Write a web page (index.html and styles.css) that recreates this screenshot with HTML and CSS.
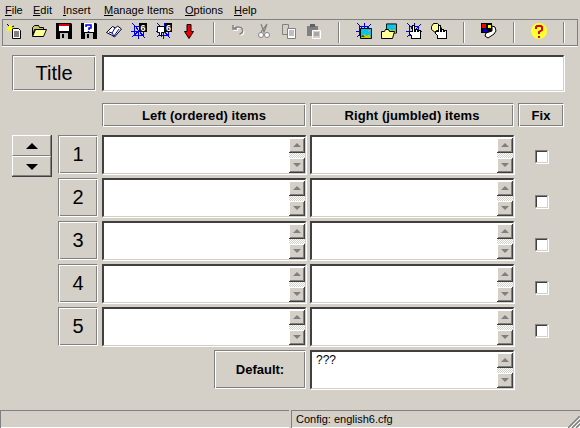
FILE: index.html
```html
<!DOCTYPE html>
<html lang="en">
<head>
  <meta charset="UTF-8" />
  <title>Matching Items</title>
  <link rel="stylesheet" href="styles.css">
</head>
<body>
  <svg class="defs" width="0" height="0">
    <symbol id="web" viewBox="0 0 16 16">
      <path class="web-line" d="M1 0L5 4L8 8L14 15M8 0V8L7 16M15 1L8 8L1 14M0 8H16M3 3H12L13 12L4 13Z" shape-rendering="crispEdges"/>
    </symbol>
    <symbol id="hand" viewBox="0 0 12 14">
      <path d="M3.500 .5h2v6h1v-2h2v2h1v-1h2v8h-9v-3l-2-2v-2h3z" fill="#fff" stroke="#000" shape-rendering="crispEdges"/>
    </symbol>
    <symbol id="floppy" viewBox="0 0 16 16">
      <path d="M0 0h15l1 1v15h-16z" fill="#000"/>
      <path d="M4 10h8v6h-8z" fill="#c0c0c0"/>
      <path d="M6 11h2v4h-2z" fill="#000"/>
    </symbol>
    <symbol id="picture" viewBox="0 0 12 11">
      <path d="M.5 .5h11v10h-11z" fill="#00c8e8" stroke="#000"/>
      <path d="M1 10l3-4l3 2l2-2l2 4z" fill="#e0c000"/>
      <path d="M3 7l2 2h-4z" fill="#006000"/>
      <path d="M8 2h2v2h-2z" fill="#a0a0a0"/>
    </symbol>
    <symbol id="folder" viewBox="0 0 16 12">
      <path d="M1.500 10.500v-8l2-2h4l1 2h4v2h-9l-2 6z" fill="#c8c860" stroke="#000"/>
      <path d="M1.500 11.500h11l3-7h-11z" fill="#ffff99" stroke="#000"/>
    </symbol>
  </svg>

  <div class="menu-bar">
    <span class="m-file"><u>F</u>ile</span>
    <span class="m-edit"><u>E</u>dit</span>
    <span class="m-insert"><u>I</u>nsert</span>
    <span class="m-manage"><u>M</u>anage Items</span>
    <span class="m-options"><u>O</u>ptions</span>
    <span class="m-help"><u>H</u>elp</span>
  </div>

  <div class="tool-bar">
    <span class="tool"><svg class="ico" viewBox="0 0 16 16"><path d="M6.500 5.500h6l2 2v8h-8z" fill="#fff" stroke="#000"/><path d="M8 9h5M8 11h5M8 13h5" stroke="#000"/><path d="M3 0l1 3l3-2l-2 3l3 1l-3 1l1 3l-3-2l-2 2l1-3l-2-1l3-1z" fill="#ffff00"/><path d="M1 1l2 2M8 3l-2 1" stroke="#000"/></svg></span>
    <span class="tool"><svg class="ico" viewBox="0 0 16 16"><use href="#folder" x="0" y="2" width="16" height="12"/></svg></span>
    <span class="tool"><svg class="ico" viewBox="0 0 16 16"><use href="#floppy" width="16" height="16"/><path d="M3 1h10v7h-10z" fill="#fff"/><path d="M3 1h10v2h-10z" fill="#e00000"/></svg></span>
    <span class="tool"><svg class="ico" viewBox="0 0 16 16"><use href="#floppy" width="16" height="16"/><path d="M3 0h10v9h-10z" fill="#fff"/><path d="M5 4v-2h5v3h-2v2M7.500 8v1" fill="none" stroke="#0000e0" stroke-width="1.500"/></svg></span>
    <span class="tool"><svg class="ico" viewBox="0 0 16 16"><path d="M.5 9.500l6-6l3 1.500l2-2l4 3l-7 8l-3-2z" fill="#fff" stroke="#000"/><path d="M9 5l-3 5M3 9l3 1l2 3l5-7" fill="none" stroke="#0000c0"/></svg></span>
    <span class="tool"><svg class="ico" viewBox="0 0 16 16"><use href="#web" width="16" height="16"/><path d="M8 0h8v9h-8z" fill="#000"/><text x="12" y="8" class="six">6</text></svg></span>
    <span class="tool"><svg class="ico" viewBox="0 0 16 16"><use href="#web" width="16" height="16"/><path d="M9 0h7v9h-7z" fill="#000"/><text x="12.500" y="8" class="six">6</text><path d="M1.500 3.500h7v6h-3v4l-2-2v-2h-2z" fill="#fff" stroke="#000"/></svg></span>
    <span class="tool"><svg class="ico" viewBox="0 0 16 16"><path d="M6 1.500h4v7h2.500l-4.500 7l-4.500-7h2.500z" fill="#f00000" stroke="#000"/></svg></span>
    <span class="tool-sep"></span>
    <span class="tool"><svg class="ico" viewBox="0 0 16 16"><path d="M3 3v4h4M3.500 6.500c3-2 8-2 9 1s-1 4-3 4.500" fill="none" stroke="#fff" stroke-width="1.500"/><path d="M2 2v4h4M2.500 5.500c3-2 8-2 9 1s-1 4-3 4.500" fill="none" stroke="#808080" stroke-width="1.500"/></svg></span>
    <span class="tool"><svg class="ico" viewBox="0 0 16 16"><path d="M5 1l3 8l3-8M11 1l-6 8" fill="none" stroke="#808080" stroke-width="1.200"/><circle cx="5" cy="12" r="2.500" fill="#fff" stroke="#808080"/><circle cx="11" cy="12" r="2.500" fill="#fff" stroke="#808080"/></svg></span>
    <span class="tool"><svg class="ico" viewBox="0 0 16 16"><path d="M1.500 1.500h6v10h-6z" fill="#d4d0c8" stroke="#808080"/><path d="M6.500 5.500h8v10h-8z" fill="#fff" stroke="#808080"/><path d="M8 8h5M8 10h5M8 12h5" stroke="#808080"/></svg></span>
    <span class="tool"><svg class="ico" viewBox="0 0 16 16"><path d="M1 3h11v10h-11z" fill="#808080"/><path d="M4 1h5v3h-5z" fill="#606060"/><path d="M6.500 7.500h8v8h-8z" fill="#d4d0c8" stroke="#fff"/><path d="M8 10h5M8 12h5" stroke="#808080"/></svg></span>
    <span class="tool-sep"></span>
    <span class="tool"><svg class="ico" viewBox="0 0 16 16"><use href="#web" width="16" height="16"/><use href="#picture" x="4" y="5" width="12" height="11"/></svg></span>
    <span class="tool"><svg class="ico" viewBox="0 0 16 16"><use href="#picture" x="5" y="0" width="11" height="11"/><path d="M.5 8.500h3l1-2h3l1 2h5l-2 7h-11z" fill="#ffff99" stroke="#000"/></svg></span>
    <span class="tool"><svg class="ico" viewBox="0 0 16 16"><use href="#web" width="16" height="16"/><use href="#hand" x="3" y="2" width="12" height="14"/></svg></span>
    <span class="tool"><svg class="ico" viewBox="0 0 16 16"><path d="M.5 6.500v-3l2-3h4l3 3l2 4h-6v3z" fill="#ffff99" stroke="#000"/><use href="#hand" x="4" y="2" width="12" height="14"/></svg></span>
    <span class="tool-sep"></span>
    <span class="tool"><svg class="ico" viewBox="0 0 16 16"><path d="M0 0h11v10h-11z" fill="#000"/><path d="M1 1h4v4h-4z" fill="#f00000"/><path d="M7 2h3v3h-3z" fill="#ffff00"/><path d="M4 5l3 4h-6z" fill="#0000e0"/><path d="M11 3l3 1l1 4l-2 3l-6 4l-3-2l1-3l6-2z" fill="#fff" stroke="#000"/></svg></span>
    <span class="tool-sep"></span>
    <span class="tool"><svg class="ico" viewBox="0 0 16 16"><circle cx="8" cy="8" r="8" fill="#ffff30"/><path d="M5 6v-2l1-1h4l1 1v3l-3 2v2" fill="none" stroke="#e00000" stroke-width="2"/><path d="M7 13h2v2h-2z" fill="#e00000"/></svg></span>
    <span class="tool-sep"></span>
  </div>

  <form class="editor">
    <div class="title-row">
      <button type="button" class="etched title-btn">Title</button>
      <div class="field title-field"></div>
    </div>

    <div class="head-row">
      <div class="etched head head-wide">Left (ordered) items</div>
      <div class="etched head head-wide">Right (jumbled) items</div>
      <div class="etched head head-fix">Fix</div>
    </div>

    <div class="body-row">
      <div class="updown">
        <button type="button" class="ud-btn"><span class="arrow-up"></span></button>
        <button type="button" class="ud-btn"><span class="arrow-down"></span></button>
      </div>
      <div class="rows">
        <div class="row">
          <button type="button" class="etched num">1</button>
          <div class="field item"><div class="scroll"><i class="sb sb-up"></i><i class="sb-track"></i><i class="sb sb-down"></i></div></div>
          <div class="field item"><div class="scroll"><i class="sb sb-up"></i><i class="sb-track"></i><i class="sb sb-down"></i></div></div>
          <div class="fix-cell fix-first"><input type="checkbox" class="check"></div>
        </div>
        <div class="row">
          <button type="button" class="etched num">2</button>
          <div class="field item"><div class="scroll"><i class="sb sb-up"></i><i class="sb-track"></i><i class="sb sb-down"></i></div></div>
          <div class="field item"><div class="scroll"><i class="sb sb-up"></i><i class="sb-track"></i><i class="sb sb-down"></i></div></div>
          <div class="fix-cell"><input type="checkbox" class="check"></div>
        </div>
        <div class="row">
          <button type="button" class="etched num">3</button>
          <div class="field item"><div class="scroll"><i class="sb sb-up"></i><i class="sb-track"></i><i class="sb sb-down"></i></div></div>
          <div class="field item"><div class="scroll"><i class="sb sb-up"></i><i class="sb-track"></i><i class="sb sb-down"></i></div></div>
          <div class="fix-cell"><input type="checkbox" class="check"></div>
        </div>
        <div class="row">
          <button type="button" class="etched num">4</button>
          <div class="field item"><div class="scroll"><i class="sb sb-up"></i><i class="sb-track"></i><i class="sb sb-down"></i></div></div>
          <div class="field item"><div class="scroll"><i class="sb sb-up"></i><i class="sb-track"></i><i class="sb sb-down"></i></div></div>
          <div class="fix-cell"><input type="checkbox" class="check"></div>
        </div>
        <div class="row">
          <button type="button" class="etched num">5</button>
          <div class="field item"><div class="scroll"><i class="sb sb-up"></i><i class="sb-track"></i><i class="sb sb-down"></i></div></div>
          <div class="field item"><div class="scroll"><i class="sb sb-up"></i><i class="sb-track"></i><i class="sb sb-down"></i></div></div>
          <div class="fix-cell"><input type="checkbox" class="check"></div>
        </div>
        <div class="row default-row">
          <div class="etched default-label">Default:</div>
          <div class="field item"><span class="item-text">???</span><div class="scroll"><i class="sb sb-up"></i><i class="sb-track"></i><i class="sb sb-down"></i></div></div>
        </div>
      </div>
    </div>
  </form>

  <div class="status-bar">
    <div class="status-cell"></div>
    <div class="status-cell status-last">
      <span>Config: english6.cfg</span>
      <svg class="grip" viewBox="0 0 12 12"><path d="M12 0L0 12M12 4L4 12M12 8L8 12" stroke="#808080" stroke-width="1.500"/><path d="M12 2L2 12M12 6L6 12M12 10L10 12" stroke="#fff"/></svg>
    </div>
  </div>
</body>
</html>
```
FILE: styles.css
```css
* {
  box-sizing: border-box;
}

html, body {
  height: 100%;
}

body {
  margin: 0;
  background-color: #d4d0c8;
  color: #000;
  font-family: "Liberation Sans", Arial, sans-serif;
  font-size: 12px;
  overflow: hidden;
  display: flex;
  flex-direction: column;
}

.defs {
  position: absolute;
}

/* menu */
.menu-bar {
  height: 19px;
  display: flex;
  align-items: center;
  padding-left: 5px;
  font-size: 11px;
}

.m-file { width: 28px; }
.m-edit { width: 30px; }
.m-insert { width: 41px; }
.m-manage { width: 81px; }
.m-options { width: 49px; }

/* toolbar */
.tool-bar {
  height: 27px;
  margin: 0 2px;
  display: flex;
  align-items: center;
  border: 1px solid #808080;
  box-shadow: 0 1px 0 #fff, 0 2px 0 #d4d0c8;
}

.tool {
  width: 25px;
  flex: none;
  display: flex;
  justify-content: center;
  margin-top: -3px;
}

.tool:first-child {
  margin-left: -2px;
}

.ico {
  width: 16px;
  height: 16px;
  display: block;
}

.web-line {
  fill: none;
  stroke: #0000f0;
  stroke-width: 1;
}

.six {
  fill: #fff;
  font-family: "Liberation Sans", sans-serif;
  font-size: 9px;
  font-weight: bold;
  text-anchor: middle;
}

.tool-sep {
  width: 25px;
  height: 21px;
  flex: none;
  background: linear-gradient(to right, #808080 1px, #fff 1px, #fff 2px, transparent 2px) no-repeat 12px 0;
}

/* shared 3d looks */
.etched {
  background-color: #d4d0c8;
  border: 1px solid #808080;
  border-right-color: #fff;
  border-bottom-color: #fff;
  box-shadow: inset 1px 1px 0 #fff, inset -1px -1px 0 #808080;
  color: #000;
  font-family: "Liberation Sans", Arial, sans-serif;
  padding: 0;
  display: flex;
  align-items: center;
  justify-content: center;
}

.field {
  background-color: #fff;
  border-top: 2px solid #404040;
  border-left: 2px solid #404040;
  border-right: 1px solid #d4d0c8;
  border-bottom: 1px solid #d4d0c8;
  box-shadow: 1px 1px 0 #fff;
}

/* form */
.editor {
  flex: 1;
  padding: 9px 16px 0 12px;
}

.title-row {
  display: flex;
  gap: 6px;
  height: 36px;
}

.title-btn {
  width: 84px;
  font-size: 20px;
}

.title-field {
  flex: 1;
}

.head-row {
  display: flex;
  gap: 4px;
  height: 24px;
  margin: 12px 0 8px 90px;
}

.head {
  font-weight: bold;
  font-size: 13px;
  letter-spacing: .1px;
}

.head-wide {
  width: 204px;
}

.head-fix {
  width: 46px;
}

.body-row {
  display: flex;
  gap: 6px;
}

.updown {
  width: 40px;
  height: 42px;
  display: flex;
  flex-direction: column;
  border-bottom: 1px solid #404040;
  border-right: 1px solid #404040;
}

.ud-btn {
  flex: 1;
  padding: 2px 0 0;
  background-color: #d4d0c8;
  border: none;
  border-top: 1px solid #fff;
  border-left: 1px solid #fff;
  border-bottom: 1px solid #808080;
  border-right: 1px solid #808080;
  display: flex;
  align-items: center;
  justify-content: center;
}

.arrow-up, .arrow-down {
  width: 0;
  height: 0;
  border-left: 6px solid transparent;
  border-right: 6px solid transparent;
}

.arrow-up {
  border-bottom: 6px solid #000;
}

.arrow-down {
  border-top: 6px solid #000;
}

.rows {
  display: flex;
  flex-direction: column;
  gap: 4px;
}

.row {
  display: flex;
  gap: 4px;
  height: 39px;
}

.num {
  width: 40px;
  font-size: 20px;
}

.item {
  width: 204px;
  display: flex;
  justify-content: space-between;
}

.item-text {
  font-size: 12px;
  padding: 1px 0 0 4px;
}

.scroll {
  width: 16px;
  height: 35px;
  margin: 1px 0 0 auto;
  display: flex;
  flex-direction: column;
}

.sb {
  height: 15px;
  flex: none;
  background-color: #d4d0c8;
  border-right: 1px solid #404040;
  border-bottom: 1px solid #404040;
  box-shadow: inset 1px 1px 0 #fff, inset -1px -1px 0 #808080;
  display: flex;
  align-items: center;
  justify-content: center;
}

.sb::before {
  content: "";
  border-left: 4px solid transparent;
  border-right: 4px solid transparent;
}

.sb-up::before {
  border-bottom: 4px solid #808080;
}

.sb-down::before {
  border-top: 4px solid #808080;
}

.sb-track {
  flex: 1;
  background: repeating-conic-gradient(#d4d0c8 0 25%, #fff 0 50%) 0 0 / 2px 2px;
}

.fix-cell {
  width: 46px;
  padding-top: 7px;
  display: flex;
  align-items: center;
  justify-content: center;
}

.fix-first {
  padding-top: 3px;
}

.check {
  appearance: none;
  width: 13px;
  height: 13px;
  margin: 0;
  background-color: #fff;
  border-top: 1px solid #808080;
  border-left: 1px solid #808080;
  border-right: 1px solid #d4d0c8;
  border-bottom: 1px solid #d4d0c8;
  box-shadow: 1px 1px 0 #fff, inset 1px 1px 0 #404040;
}

.default-row {
  justify-content: flex-end;
  padding-right: 50px;
}

.default-label {
  width: 92px;
  font-weight: bold;
  font-size: 13px;
}

/* status */
.status-bar {
  height: 18px;
  display: flex;
  gap: 2px;
  font-size: 11px;
}

.status-cell {
  flex: 1;
  padding: 0 0 0 4px;
  border-top: 1px solid #808080;
  border-left: 1px solid #808080;
  box-shadow: inset 0 -1px 0 #fff;
  line-height: 17px;
}

.status-last {
  display: flex;
  justify-content: space-between;
  align-items: flex-end;
}

.grip {
  width: 12px;
  height: 12px;
  display: block;
}
```
